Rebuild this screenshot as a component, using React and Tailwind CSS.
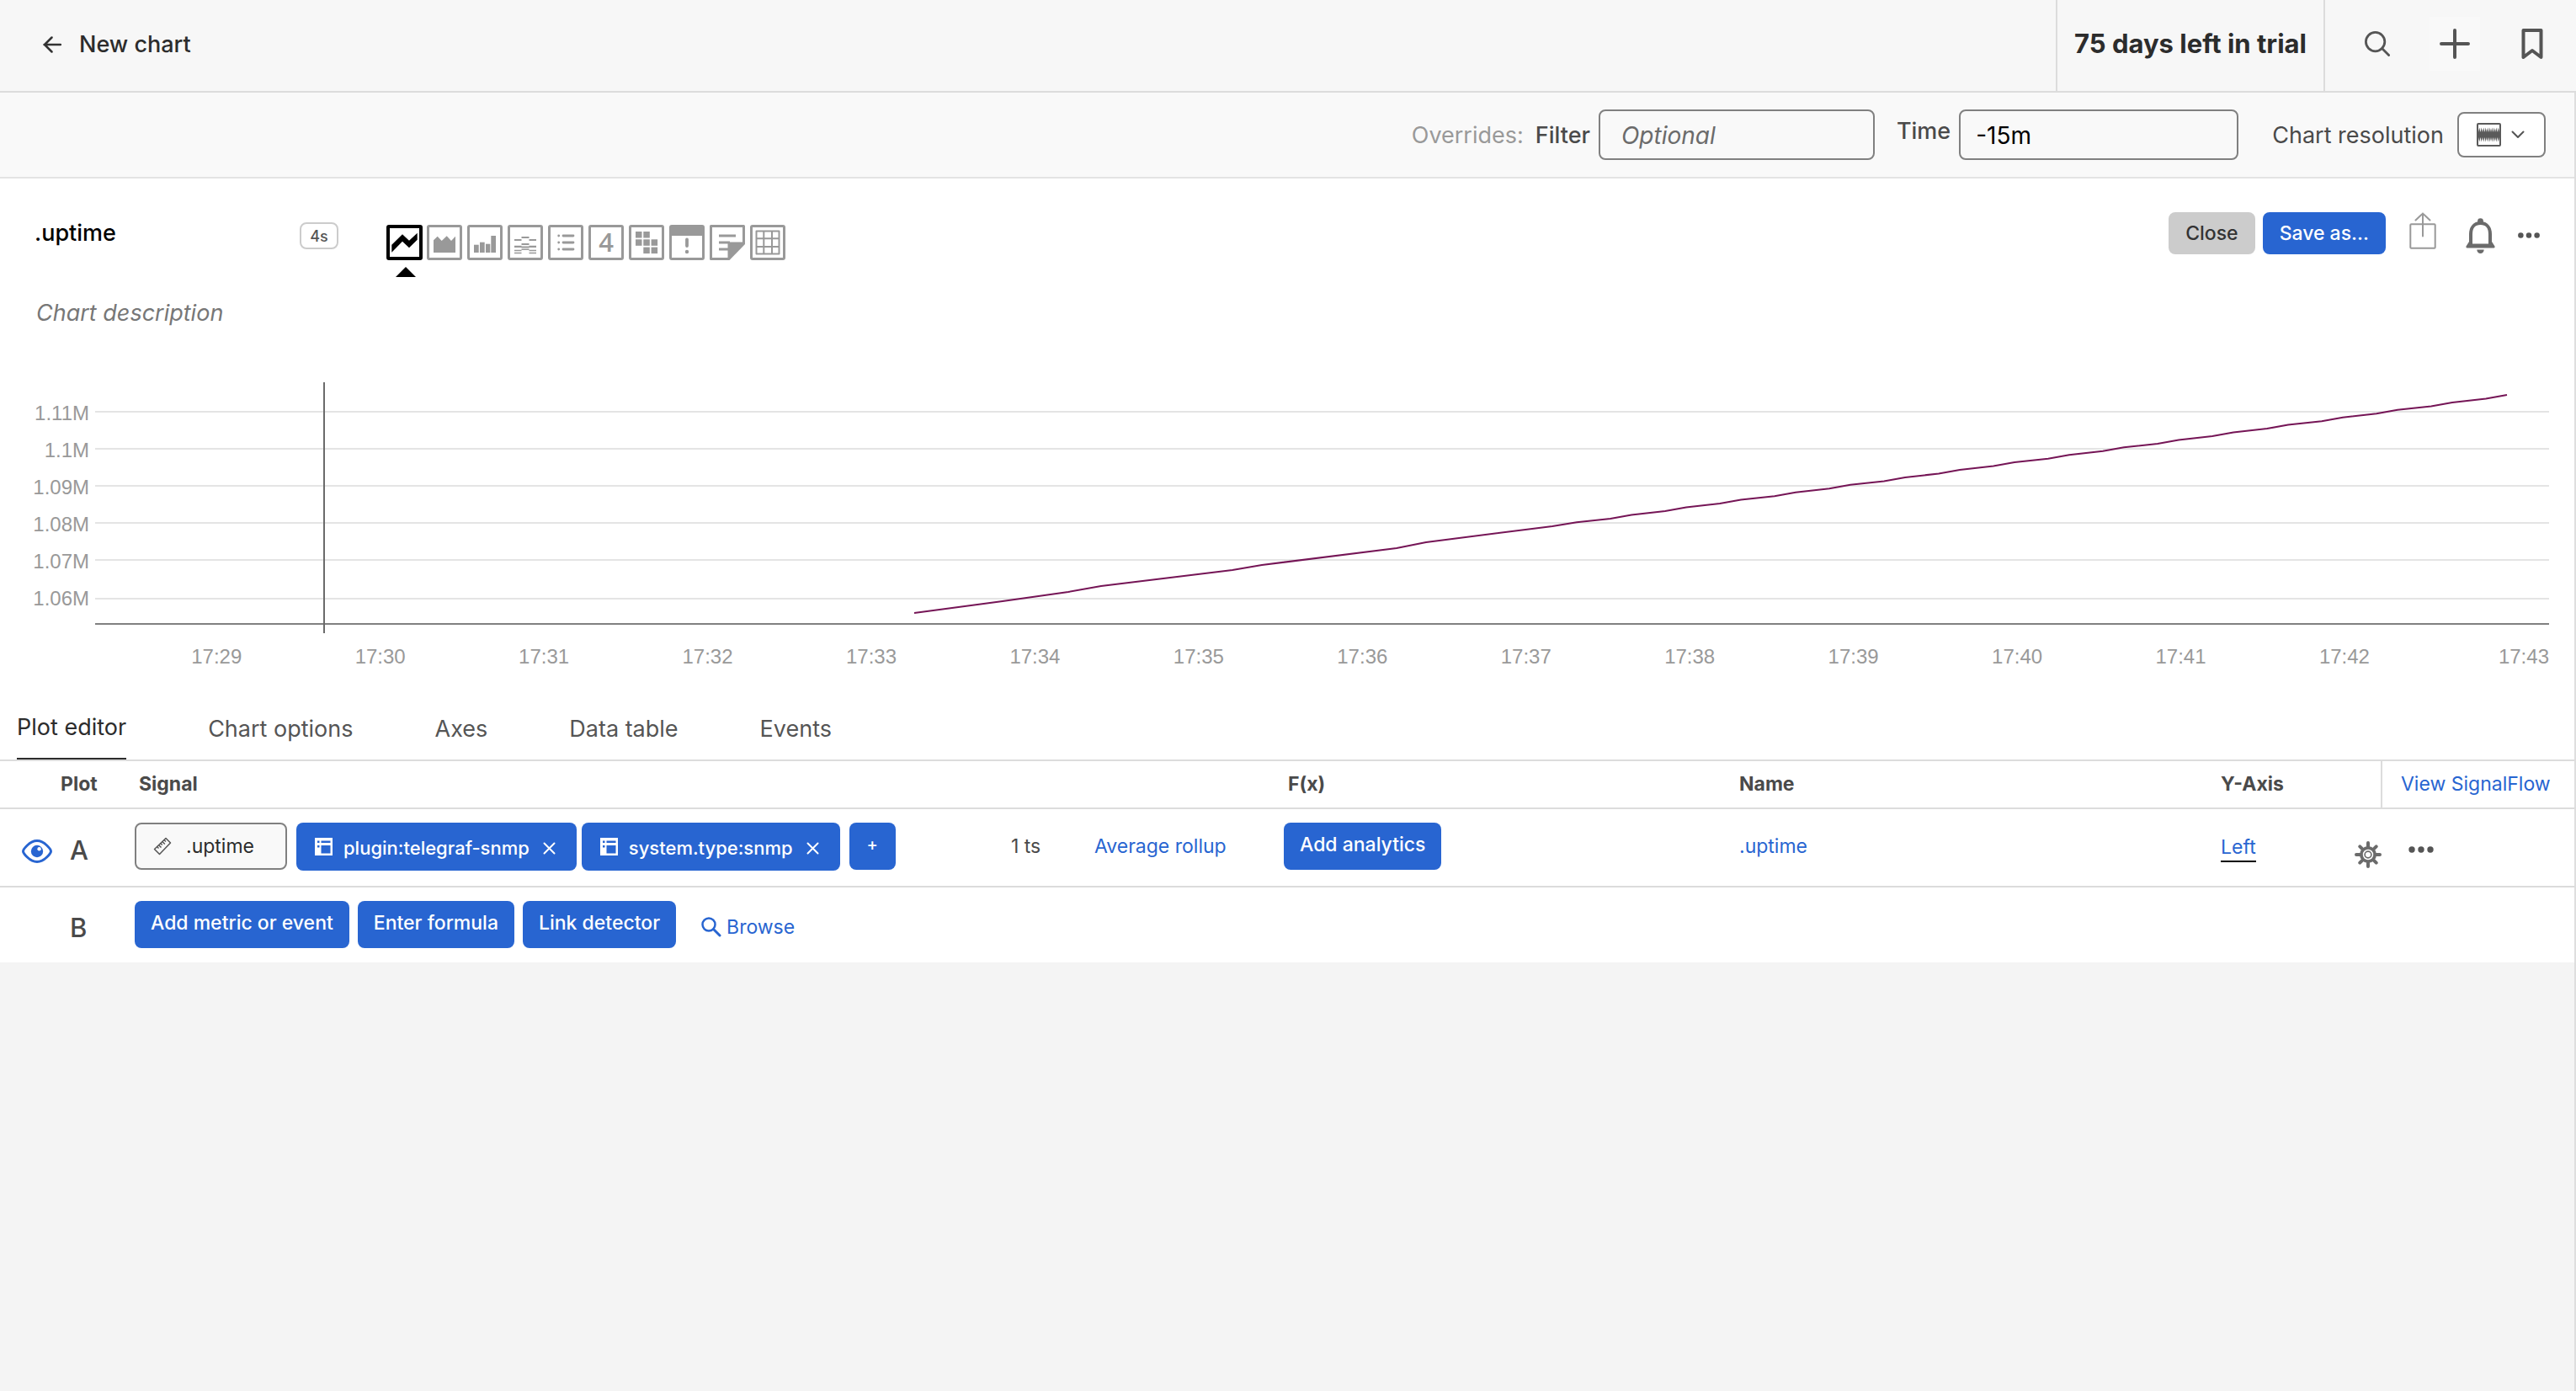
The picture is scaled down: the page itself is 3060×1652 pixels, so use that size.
import React from "react";

const Y_LABELS = ["1.11M", "1.1M", "1.09M", "1.08M", "1.07M", "1.06M"];
const GRID_Y = [35, 79, 123, 167, 211, 257];
const X_LABELS = Array.from({ length: 15 }, (_, i) => `17:${29 + i}`);

// Series points in plot coordinates: sparse samples first, then a short repeating step.
function seriesPoints() {
  const pts = [
    [973, 274],
    [1078, 260],
    [1156, 249],
    [1195, 242],
    [1351, 223],
    [1386, 217],
    [1546, 197],
    [1581, 190],
    [1731, 171],
  ];
  for (let i = 17; i >= 0; i--) {
    const x = 2865 - i * 65;
    const y = 15 + i * 8.9;
    if (i < 17) pts.push([x - 25, y + 4.5]);
    pts.push([x, y]);
  }
  return pts.map((p) => p.join(",")).join(" ");
}

function ArrowLeft() {
  return (
    <svg width="22" height="20" viewBox="0 0 22 20" fill="none" stroke="#333" strokeWidth="2.5" strokeLinecap="round" strokeLinejoin="round">
      <path d="M21 10H1.5M10.5 1.5L2 10l8.5 8.5" />
    </svg>
  );
}

function SearchIcon() {
  return (
    <svg width="30" height="30" viewBox="0 0 30 30" fill="none" stroke="#555" strokeWidth="2.8" strokeLinecap="round">
      <circle cx="12.6" cy="12.6" r="11.2" />
      <path d="M20.6 20.6l8 8" />
    </svg>
  );
}

function PlusIcon() {
  return (
    <svg width="36" height="36" viewBox="0 0 36 36" fill="none" stroke="#555" strokeWidth="4" strokeLinecap="round">
      <path d="M18 2v32M2 18h32" />
    </svg>
  );
}

function BookmarkIcon() {
  return (
    <svg width="26" height="36" viewBox="0 0 26 36" fill="none" stroke="#555" strokeWidth="4" strokeLinejoin="round">
      <path d="M2.5 2h21v32L13 26 2.5 34z" />
    </svg>
  );
}

function ResolutionIcon() {
  const x = (i) => 2 + i * 2.5;
  const top = Array.from({ length: 10 }, (_, i) => `L${x(i) + 1.25} 5.5L${x(i) + 2.5} 11`).join("");
  const bottom = Array.from({ length: 10 }, (_, i) => `L${27 - i * 2.5 - 1.25} 22.5L${27 - i * 2.5 - 2.5} 17`).join("");
  return (
    <svg width="29" height="28" viewBox="0 0 29 28">
      <rect x="1" y="1" width="27" height="26" rx="1" fill="none" stroke="#5a5a5a" strokeWidth="2" />
      <path d={`M2 11${top}L27 17${bottom}Z`} fill="#5a5a5a" />
    </svg>
  );
}

function ChevronDown() {
  return (
    <svg width="16" height="10" viewBox="0 0 16 10" fill="none" stroke="#555" strokeWidth="2" strokeLinecap="round" strokeLinejoin="round">
      <path d="M1.5 1.5L8 8l6.5-6.5" />
    </svg>
  );
}

function ShareIcon() {
  return (
    <svg width="32" height="44" viewBox="0 0 32 44" fill="none" stroke="#999" strokeWidth="2">
      <rect x="1.3" y="14.3" width="29.4" height="28.4" rx="1" />
      <path d="M16 28.5V1.5M7.5 9.5L16 1.5l8.5 8" strokeLinecap="round" />
    </svg>
  );
}

function BellIcon() {
  return (
    <svg width="35" height="42" viewBox="0 0 35 42">
      <path d="M17.5 6C10 6 6 11.5 6 19v13.5h23V19C29 11.5 25 6 17.5 6z" fill="none" stroke="#6b6b6b" strokeWidth="4" />
      <circle cx="17.5" cy="3.6" r="3.4" fill="#6b6b6b" />
      <path d="M4 28L0.5 33.5q-.5 2 1 2h32q1.5 0 1-2L31 28v3H4z" fill="#6b6b6b" />
      <path d="M13.3 37.5h8.4a4.2 4.5 0 0 1-8.4 0z" fill="#6b6b6b" />
    </svg>
  );
}

function Dots({ className }) {
  return (
    <svg className={className} viewBox="0 0 30 8" fill="#555">
      <circle cx="4" cy="4" r="3.7" />
      <circle cx="15" cy="4" r="3.7" />
      <circle cx="26" cy="4" r="3.7" />
    </svg>
  );
}

function EyeIcon() {
  return (
    <svg width="36" height="28" viewBox="0 0 36 28">
      <path d="M1.5 14C1.5 12 9 1.5 18 1.5S34.5 12 34.5 14 27 26.500 18 26.500 1.500 16 1.500 14z" fill="none" stroke="#2865d1" strokeWidth="3" />
      <circle cx="18" cy="14" r="7.2" fill="#2865d1" />
      <circle cx="20.6" cy="11.2" r="2.2" fill="#fff" />
    </svg>
  );
}

function RulerIcon() {
  return (
    <svg width="22" height="22" viewBox="0 0 22 22" fill="none" stroke="#555" strokeWidth="1.5" strokeLinejoin="round">
      <path d="M15 1.5L20.5 7 7.5 20.5 1.5 14.5z" />
      <path d="M4.5 11.5l2 2M6.5 9.5l3 3M8.7 7.5l2 2M10.8 5.5l3 3M13 3.5l2 2" />
    </svg>
  );
}

function DimensionIcon() {
  return (
    <svg width="21" height="21" viewBox="0 0 21 21">
      <rect width="21" height="21" fill="#fff" />
      <g fill="#2865d1">
        <rect x="3" y="3.5" width="2.5" height="2.5" />
        <rect x="3" y="9" width="2.5" height="2.5" />
        <rect x="7.5" y="3.5" width="11" height="2.5" />
        <rect x="7.5" y="9" width="11" height="9.5" />
      </g>
    </svg>
  );
}

function CrossIcon() {
  return (
    <svg width="15" height="15" viewBox="0 0 15 15" stroke="#fff" strokeWidth="2" strokeLinecap="round">
      <path d="M1.5 1.5l12 12M13.5 1.5l-12 12" />
    </svg>
  );
}

function GearIcon() {
  return (
    <svg width="32" height="32" viewBox="0 0 32 32">
      <path d="M16 2v28M2 16h28M6.3 6.3l19.4 19.4M25.7 6.3L6.3 25.7" stroke="#6b6b6b" strokeWidth="4" strokeLinecap="round" />
      <circle cx="16" cy="16" r="10" fill="#6b6b6b" />
      <circle cx="16" cy="16" r="6.2" fill="#fff" />
      <circle cx="16" cy="16" r="3.9" fill="none" stroke="#6b6b6b" strokeWidth="1.6" />
    </svg>
  );
}

function Frame({ active }) {
  return active ? (
    <rect x="2" y="2" width="39" height="38" rx="1" fill="none" stroke="#000" strokeWidth="4" />
  ) : (
    <rect x="1.5" y="1.5" width="39" height="39" rx="1.5" fill="none" stroke="#999" strokeWidth="3" />
  );
}

const CHART_TYPES = [
  {
    name: "Line chart",
    active: true,
    art: <path fill="#000" d="M6.3 23.7L19 11.3l8 7.400 9.700-9v8L27 27.300l-8-7.600-12.700 13z" />,
  },
  {
    name: "Area chart",
    art: <path fill="#999" d="M8 33V18.3l4.7-4.6 5 5.300 6-5.700L29 19l5-5.300V33z" />,
  },
  {
    name: "Column chart",
    art: (
      <g fill="#999">
        <rect x="8" y="23.7" width="5.7" height="9.3" />
        <rect x="15" y="20.7" width="5.7" height="12.3" />
        <rect x="22" y="22.7" width="5.3" height="10.3" />
        <rect x="28.3" y="13" width="5.7" height="20" />
      </g>
    ),
  },
  {
    name: "Histogram",
    art: (
      <g stroke="#999" strokeWidth="2.2">
        <path d="M16.5 15h9M8 18h8.5M25.5 18H34M16.5 23h9M8 25.8h8.5M25.5 25.8H34M16.5 26.5h9" />
        <path d="M16.5 29.3h9M8 30.5h8.5M25.5 30.5H34M8 33.5h8.5M25.5 33.5H34" strokeWidth="1.5" />
      </g>
    ),
  },
  {
    name: "List",
    art: <path d="M12.7 13h0M12.7 21h0M12.7 29h0M18 13h12M18 21h12M18 29h12" stroke="#999" strokeWidth="2.8" strokeLinecap="round" />,
  },
  {
    name: "Single value",
    art: (
      <text x="21" y="32" textAnchor="middle" fill="#999" fontSize="31" fontWeight="600" fontFamily='"Open Sans", sans-serif'>
        4
      </text>
    ),
  },
  {
    name: "Heatmap",
    art: (
      <g fill="#999">
        <rect x="8" y="8" width="7.5" height="7.5" />
        <rect x="17.3" y="8" width="7.5" height="7.5" />
        <rect x="8" y="17.3" width="7.5" height="7.5" />
        <rect x="17.3" y="17.3" width="7.5" height="7.5" />
        <rect x="26.6" y="17.3" width="7.5" height="7.5" />
        <rect x="17.3" y="26.6" width="7.5" height="7.5" />
        <rect x="26.6" y="26.6" width="7.5" height="7.5" />
      </g>
    ),
  },
  {
    name: "Event feed",
    art: (
      <g fill="#999">
        <rect x="1" y="1" width="40" height="12" />
        <path d="M21 17.5v7.5" stroke="#999" strokeWidth="3.8" strokeLinecap="round" />
        <circle cx="21" cy="32" r="2.2" />
      </g>
    ),
  },
  {
    name: "Text note",
    frameless: true,
    art: (
      <g fill="none" stroke="#999" strokeWidth="3">
        <path d="M23 40.5H1.5v-39h39V22" strokeLinejoin="round" />
        <path d="M11 13h20M11 21h13M11 29h11" strokeWidth="2.8" />
        <path d="M21.5 20.5H42V23L23.5 42h-2z" fill="#999" stroke="none" />
      </g>
    ),
  },
  {
    name: "Table",
    art: <path d="M7.5 7.5h27v27h-27zM16.3 7.5v27M26 7.5v27M7.5 16.3h27M7.5 26h27" fill="none" stroke="#999" strokeWidth="2" strokeLinejoin="round" />,
  },
];

function Chip({ label }) {
  return (
    <span className="flex h-[57px] items-center rounded-lg bg-[#2865d1] pr-[25px] pl-[22px] text-[22px] font-medium text-white">
      <DimensionIcon />
      <span className="ml-[13px] pt-1">{label}</span>
      <button type="button" aria-label={`Remove ${label}`} className="ml-4 pt-1">
        <CrossIcon />
      </button>
    </span>
  );
}

function BlueButton({ children }) {
  return (
    <button type="button" className="h-14 shrink-0 rounded-lg bg-[#2865d1] px-[19px] pb-1 text-[23px] font-medium whitespace-nowrap text-white">
      {children}
    </button>
  );
}

function Header() {
  return (
    <header className="flex h-[110px] items-stretch border-b-2 border-[#dcdcdc] bg-[#f7f7f7]">
      <a href="#back" className="mr-auto flex items-center gap-[21px] pb-[2px] pl-[51px] text-[27px] font-medium text-[#2c2c2c]">
        <ArrowLeft />
        New chart
      </a>
      <div className="flex items-center border-x-2 border-[#dcdcdc] px-5 pb-1 text-[31px] font-bold text-[#2c2c2c]">75 days left in trial</div>
      <div className="flex items-center gap-8 pr-[22px] pb-1 pl-8">
        <button type="button" aria-label="Search" className="flex h-16 w-[60px] items-center justify-center">
          <SearchIcon />
        </button>
        <button type="button" aria-label="Create" className="flex h-16 w-[60px] items-center justify-center bg-[#f9f9f9]">
          <PlusIcon />
        </button>
        <button type="button" aria-label="Bookmarks" className="flex h-16 w-[60px] items-center justify-center">
          <BookmarkIcon />
        </button>
      </div>
    </header>
  );
}

function Overrides() {
  return (
    <section className="flex h-[102px] items-center justify-end border-b-2 border-[#e3e3e3] bg-[#f9f9f9] pr-[34px] text-[27px] text-[#4a4a4a]">
      <span className="mr-[14px] pt-[2px] text-[#999]">Overrides:</span>
      <label htmlFor="filter" className="mr-[10px] pt-[2px] font-medium">
        Filter
      </label>
      <input
        id="filter"
        placeholder="Optional"
        className="h-[60px] w-[328px] rounded-lg border-2 border-[#808080] bg-[#f9f9f9] px-[25px] pt-[2px] text-[28px] placeholder:text-[#6b6b6b] placeholder:italic"
      />
      <label htmlFor="time" className="mr-[10px] ml-[26px] pb-2 font-medium">
        Time
      </label>
      <input id="time" defaultValue="-15m" className="h-[60px] w-[332px] rounded-lg border-2 border-[#808080] bg-[#f9f9f9] px-[18px] pt-[2px] text-[28px] text-black" />
      <label htmlFor="resolution" className="mr-4 ml-10 pt-[2px]">
        Chart resolution
      </label>
      <button id="resolution" type="button" className="flex h-[54px] w-[105px] items-center gap-3 rounded-lg border-2 border-[#808080] bg-white pl-[21px]">
        <ResolutionIcon />
        <ChevronDown />
      </button>
    </section>
  );
}

function TitleRow() {
  return (
    <div className="flex items-start pt-10 pr-10 pl-[41px]">
      <h1 className="w-[315px] text-[27px] leading-[50px] font-medium text-black">.uptime</h1>
      <span className="mt-3 flex h-8 w-[46px] items-center justify-center rounded-lg border-2 border-[#ccc] text-[18px] font-medium text-[#555]">4s</span>
      <div className="mt-[15px] ml-[57px] flex gap-[6px]">
        {CHART_TYPES.map((t) => (
          <button key={t.name} type="button" aria-label={t.name} aria-pressed={!!t.active} className="relative h-[42px] w-[42px]">
            <svg className="h-[42px] w-[42px] overflow-visible" viewBox="0 0 42 42">
              {!t.frameless && <Frame active={t.active} />}
              {t.art}
            </svg>
            {t.active && (
              <svg className="absolute top-[50px] left-[11px]" width="24" height="12" viewBox="0 0 24 12">
                <path d="M0 12L12 0l12 12z" />
              </svg>
            )}
          </button>
        ))}
      </div>
      <div className="ml-auto flex items-start">
        <button type="button" className="h-[50px] rounded-lg bg-[#ccc] px-5 text-[23px] font-medium text-[#333]">
          Close
        </button>
        <button type="button" className="ml-[9px] h-[50px] rounded-lg bg-[#2865d1] px-5 text-[23px] font-medium text-white">
          Save as…
        </button>
        <button type="button" aria-label="Share" className="ml-7">
          <ShareIcon />
        </button>
        <button type="button" aria-label="Alerts" className="mt-[7px] ml-[35px]">
          <BellIcon />
        </button>
        <button type="button" aria-label="More actions" className="mt-6 ml-[26px]">
          <Dots className="h-[7px] w-7" />
        </button>
      </div>
    </div>
  );
}

function Chart() {
  return (
    <div className="mt-[62px] pr-[30px]">
      <div className="flex">
        <div className="flex w-[113px] flex-col pt-[15px] pr-[7px] text-right font-['Liberation_Sans',Arial,sans-serif] text-[24px] leading-[44px] text-[#999]">
          {Y_LABELS.map((l) => (
            <span key={l}>{l}</span>
          ))}
        </div>
        <svg className="h-[298px] min-w-0 flex-1" viewBox="0 0 2915 298" preserveAspectRatio="none" role="img" aria-label=".uptime over time">
          {GRID_Y.map((y) => (
            <path key={y} d={`M0 ${y}H2915`} stroke="#e4e4e4" strokeWidth="2" vectorEffect="non-scaling-stroke" />
          ))}
          <path d="M0 287H2915" stroke="#808080" strokeWidth="2" vectorEffect="non-scaling-stroke" />
          <path d="M272 0V298" stroke="#6b6b6b" strokeWidth="2" vectorEffect="non-scaling-stroke" />
          <polyline points={seriesPoints()} fill="none" stroke="#751556" strokeWidth="2" vectorEffect="non-scaling-stroke" />
        </svg>
      </div>
      <div className="mt-3 grid grid-cols-[repeat(14,4fr)_3fr] pl-40 text-center font-['Liberation_Sans',Arial,sans-serif] text-[24px] leading-8 text-[#999]">
        {X_LABELS.map((l) => (
          <span key={l} className="last:text-right">
            {l}
          </span>
        ))}
      </div>
    </div>
  );
}

function Tabs() {
  return (
    <nav className="mt-[50px] flex items-start gap-[97px] border-b-2 border-[#dcdcdc] pl-5 text-[27px] leading-9 text-[#555]">
      <button type="button" aria-current="page" className="border-b-2 border-[#2c2c2c] pb-[18px] text-[#2c2c2c]">
        Plot editor
      </button>
      {["Chart options", "Axes", "Data table", "Events"].map((t) => (
        <button key={t} type="button" className="pt-[2px]">
          {t}
        </button>
      ))}
    </nav>
  );
}

function PlotTable() {
  return (
    <table className="w-full table-fixed border-collapse text-left text-[23px] text-[#4a4a4a]">
      <colgroup>
        <col className="w-[72px]" />
        <col className="w-[88px]" />
        <col />
        <col className="w-[99px]" />
        <col className="w-[225px]" />
        <col className="w-[541px]" />
        <col className="w-[572px]" />
        <col className="w-[159px]" />
        <col className="w-[32px]" />
        <col className="w-[229px]" />
      </colgroup>
      <thead>
        <tr className="h-14 border-b-2 border-[#dcdcdc]">
          <th aria-label="Visibility" />
          <th className="font-bold">Plot</th>
          <th className="pl-[5px] font-bold">Signal</th>
          <th aria-label="Time series" />
          <th aria-label="Rollup" />
          <th className="pl-[5px] font-bold">F(x)</th>
          <th className="font-bold">Name</th>
          <th className="font-bold">Y-Axis</th>
          <th aria-label="Settings" />
          <th className="border-l-2 border-[#dcdcdc] pl-[22px] font-normal">
            <a href="#signalflow" className="text-[#2865d1]">
              View SignalFlow
            </a>
          </th>
        </tr>
      </thead>
      <tbody>
        <tr className="h-[93px] border-b-2 border-[#dcdcdc] align-top [&>td]:pt-4">
          <td>
            <button type="button" aria-label="Hide plot A" className="flex h-14 items-center pt-3 pl-[26px]">
              <EyeIcon />
            </button>
          </td>
          <td>
            <span className="flex h-14 items-center pt-[10px] pl-[11px] text-[31px] font-medium">A</span>
          </td>
          <td>
            <div className="flex">
              <label className="flex h-14 w-[181px] items-center rounded-lg border-2 border-[#808080] bg-[#f9f9f9] pl-5">
                <RulerIcon />
                <input aria-label="Signal" defaultValue=".uptime" className="ml-[17px] w-[100px] bg-transparent text-[#2c2c2c]" />
              </label>
              <div className="ml-[11px] flex gap-[6px]">
                <Chip label="plugin:telegraf-snmp" />
                <Chip label="system.type:snmp" />
              </div>
              <button type="button" aria-label="Add filter" className="ml-[11px] h-14 w-[55px] rounded-lg bg-[#2865d1] pb-1 text-[20px] font-medium text-white">
                +
              </button>
            </div>
          </td>
          <td>
            <span className="flex h-14 items-center">1 ts</span>
          </td>
          <td>
            <a href="#rollup" className="flex h-14 items-center text-[#2865d1]">
              Average rollup
            </a>
          </td>
          <td>
            <BlueButton>Add analytics</BlueButton>
          </td>
          <td>
            <a href="#name" className="flex h-14 items-center text-[#2865d1]">
              .uptime
            </a>
          </td>
          <td>
            <div className="flex h-14 items-center">
              <a href="#axis" className="mt-1 border-b-2 border-black leading-8 text-[#2865d1]">
                Left
              </a>
            </div>
          </td>
          <td>
            <button type="button" aria-label="Plot settings" className="flex h-14 items-center pt-5">
              <GearIcon />
            </button>
          </td>
          <td>
            <button type="button" aria-label="More plot actions" className="flex h-14 items-center pt-2 pl-8">
              <Dots className="h-2 w-[30px]" />
            </button>
          </td>
        </tr>
        <tr className="h-[90px] align-top [&>td]:pt-4">
          <td />
          <td>
            <span className="flex h-14 items-center pt-2 pl-[11px] text-[31px] font-medium">B</span>
          </td>
          <td colSpan={8}>
            <div className="flex gap-[10px]">
              <BlueButton>Add metric or event</BlueButton>
              <BlueButton>Enter formula</BlueButton>
              <BlueButton>Link detector</BlueButton>
              <a href="#browse" className="ml-5 flex h-14 items-center gap-[6px] pt-[6px] text-[#2865d1]">
                <svg width="24" height="24" viewBox="0 0 24 24" fill="none" stroke="#2865d1" strokeWidth="2.5" strokeLinecap="round">
                  <circle cx="9" cy="9" r="7.5" />
                  <path d="M14.5 14.5l7.5 7.5" strokeWidth="3" />
                </svg>
                Browse
              </a>
            </div>
          </td>
        </tr>
      </tbody>
    </table>
  );
}

export default function App() {
  return (
    <div className="flex min-h-screen flex-col bg-[#f4f4f4] font-['Inter',sans-serif]">
      <Header />
      <main className="flex-1 border-r-2 border-[#dedede]">
        <Overrides />
        <div className="bg-white">
          <TitleRow />
          <input
            aria-label="Chart description"
            placeholder="Chart description"
            className="mt-[43px] ml-[43px] block h-10 w-[600px] bg-white text-[27px] placeholder:text-[#777] placeholder:italic"
          />
          <Chart />
          <Tabs />
          <PlotTable />
        </div>
      </main>
    </div>
  );
}
